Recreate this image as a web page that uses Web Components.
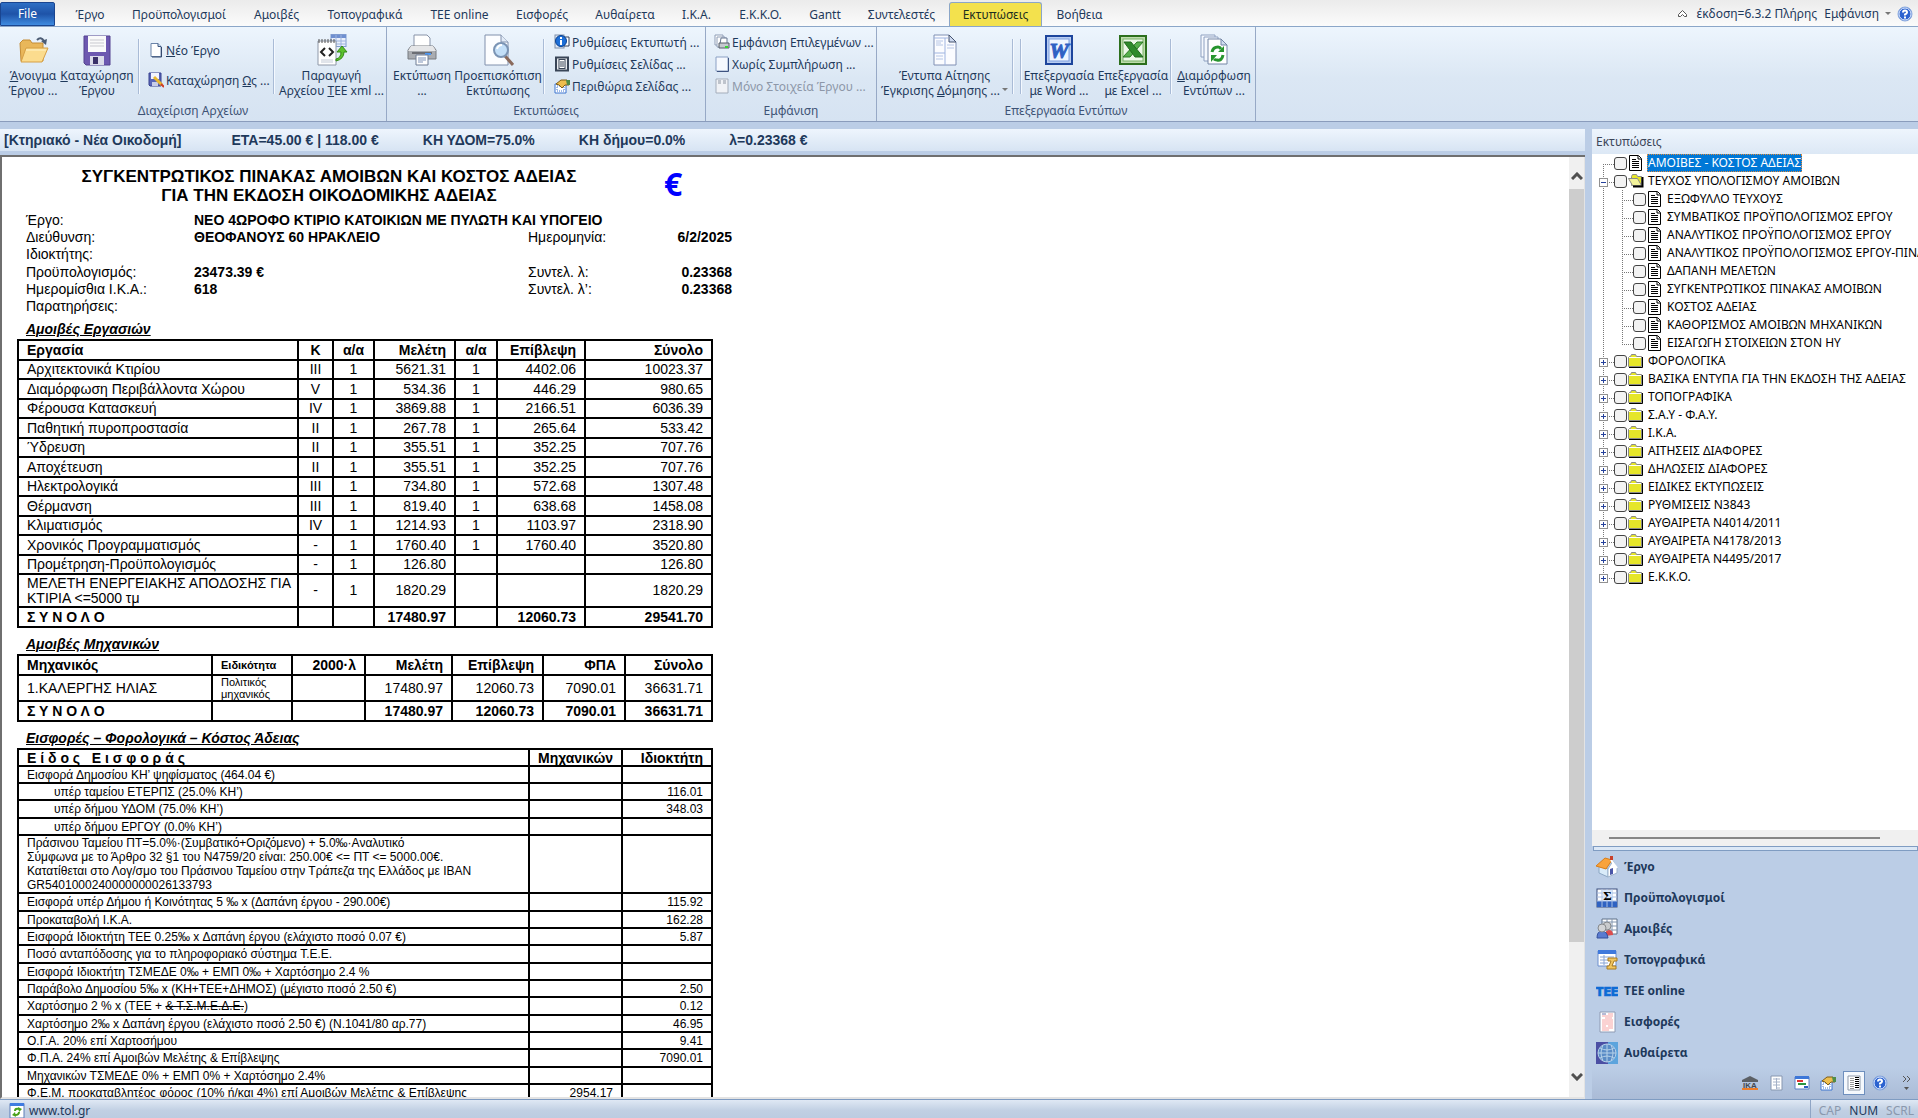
<!DOCTYPE html>
<html lang="el">
<head>
<meta charset="utf-8">
<title>Εκτυπώσεις</title>
<style>
    html, body { height: 100%; margin: 0; }
    body {
        font: 12px/15px "Noto Sans", "Open Sans", sans-serif;
        color: #1e395b;
        overflow: hidden;
    }
</style>
</head>
<body>
<print-app></print-app>

<script>
const ICONS = {
    open: [32, `<path d="M3 9l3-3h7l2 3h11v18H4z" fill="#e9b75a" stroke="#c58d35"/><path d="M4 28l5-14h22l-6 14z" fill="#fbdc8e" stroke="#d69f45"/><path d="M9 16h20" stroke="#fff3c8"/><path d="M20 6q4-4 7 1" fill="none" stroke="#4c5c74" stroke-width="2"/><path d="M24 7l6-2-1 6z" fill="#4c5c74"/>`],
    save: [32, `<path d="M3 2h26v29H5l-2-2z" fill="#6d58b0" stroke="#54438f"/><path d="M7 2h18v16H7z" fill="#fafafa"/><path d="M9 6h14M9 9h14M9 12h14" stroke="#c9c9cf"/><rect x="9" y="22" width="14" height="9" fill="#dcdcea"/><rect x="12" y="23" width="5" height="7" fill="#3b3169"/>`],
    new: [16, `<path d="M3 1.500h7l3 3v10H3z" fill="#fff" stroke="#6a83a8"/><path d="M10 1.500v3h3" fill="#cfe0f5" stroke="#3c5680"/><path d="M13.500 5v10H4" fill="none" stroke="#34496e"/>`],
    saveas: [16, `<path d="M1 1h12v13H2l-1-1z" fill="#5965b8" stroke="#36418e"/><rect x="3" y="1" width="8" height="6" fill="#f2f4ff"/><path d="M4 10h6v4H4z" fill="#c7cde9"/><path d="M6 5l8 8" stroke="#e8b730" stroke-width="3"/><path d="M13 12l3 3" stroke="#cf3c25" stroke-width="2"/>`],
    xml: [32, `<rect x="15" y="0.500" width="15" height="12" fill="#e9effb" stroke="#7f9bd0"/><rect x="15" y="1" width="15" height="3" fill="#6f8fd0"/><path d="M15 7h15M15 10h15M20 1v12M25 1v12" stroke="#9db3de"/><path d="M2 7h18v24H2z" fill="#fff" stroke="#8f98a8"/><path d="M3 5v4M6 5v4M9 5v4M12 5v4M15 5v4M18 5v4" stroke="#555"/><path d="M9 14l-4 4 4 4M13 14l4 4-4 4" fill="none" stroke="#222" stroke-width="2"/><path d="M5 26h12M5 28h12" stroke="#c3cad6"/><path d="M20 25q5-1 5-7h-4l5-6 5 6h-3q0 7-8 9z" fill="#5cc12d" stroke="#358a14"/>`],
    print: [32, `<path d="M8 1h13l3 3v9H8z" fill="#fff" stroke="#8893a8"/><path d="M5 12h22l3 4v9H2v-9z" fill="#a9acb1" stroke="#777a80"/><path d="M5 12h22l3 5H2z" fill="#e5e6e8"/><rect x="6" y="18" width="20" height="2" fill="#6c6e74"/><rect x="19" y="19" width="6" height="2" fill="#4c98f4"/><path d="M10 21h12v10H10z" fill="#fff" stroke="#6f7c94"/><path d="M12 24h8M12 26h8M12 28h5" stroke="#7f93b8"/>`],
    preview: [32, `<path d="M3 1h16l7 7v23H3z" fill="#fcfdff" stroke="#8090ac"/><path d="M19 1v7h7" fill="#e2ebf7" stroke="#8090ac"/><path d="M23 22l8 9" stroke="#8a6a5c" stroke-width="3"/><circle cx="19" cy="16" r="7" fill="#c3dff8" stroke="#7b94b4" stroke-width="2"/><path d="M15 15q1-4 5-4" fill="none" stroke="#fff" stroke-width="2"/>`],
    info: [16, `<rect x="1" y="1" width="9" height="13" fill="#dfe7f4" stroke="#7f90aa"/><path d="M10 3h5v9h-5z" fill="#fff" stroke="#32405c"/><circle cx="7" cy="7" r="5.500" fill="#1d6fd8" stroke="#0b418f"/><path d="M7 6v5M7 3v2" stroke="#fff" stroke-width="2"/>`],
    page: [16, `<rect x="2" y="1.500" width="12" height="13" fill="#e9ebee" stroke="#394557" stroke-width="2"/><rect x="5" y="3.500" width="6" height="9" fill="#fff" stroke="#394557"/><path d="M6 6h4M6 8h4M6 10h4" stroke="#394557"/>`],
    margins: [16, `<path d="M1 6h11v9H1z" fill="#fff" stroke="#3c75d0"/><path d="M3 8h7v5H3z" fill="none" stroke="#3c75d0" stroke-dasharray="1"/><path d="M2 6l5-4h6l2 2v3h-4L8 10 5 7z" fill="#edbe4f" stroke="#7e5c16"/><path d="M12 2h4v5h-3z" fill="#4f8c48"/>`],
    printsel: [16, `<path d="M1 1h8v10H1z" fill="#fff" stroke="#8e9db6"/><path d="M3 3h8v10H3z" fill="#fff" stroke="#8e9db6"/><path d="M7 4h6v6H6z" fill="#fff" stroke="#667792"/><path d="M5 9h10v5H5z" fill="#c5c9cf" stroke="#555d69"/><rect x="11" y="12" width="3" height="2" fill="#35d530"/>`],
    blank: [16, `<path d="M2 1h12v14H2z" fill="#f6f9fe" stroke="#8ba0c4"/><path d="M14.500 2v13.500H3" fill="none" stroke="#3d5380"/>`],
    form: [16, `<path d="M2 1h12v14H2z" fill="#f0f2f6" stroke="#a4adbb"/><path d="M4 3h3M9 3h3M4 5h3M9 5h3" stroke="#8d95a2"/>`],
    forms: [32, `<path d="M5 1h15l7 7v23H5z" fill="#fbfcff" stroke="#8090b4"/><path d="M20 1v7h7z" fill="#cdd9ef" stroke="#45536f"/><path d="M16 4v27M5 4h14M5 19h11" stroke="#9fb4e0"/><path d="M7 7h7M7 9h5M7 11h7M18 11h7M18 14h7M7 22h7M7 25h7" stroke="#b6c6e6"/>`],
    word: [32, `<rect x="3" y="2" width="26" height="28" fill="#b9cdf2" stroke="#1d459c" stroke-width="2"/><rect x="6" y="5" width="20" height="22" fill="#eef4ff" stroke="#7d9fdf"/><text x="16" y="24" font-family="Liberation Serif, serif" font-weight="bold" font-style="italic" font-size="22" text-anchor="middle" fill="#2f60c4" stroke="#2f60c4">W</text>`],
    excel: [32, `<rect x="3" y="2" width="26" height="28" fill="#bfdcae" stroke="#2c6f1d" stroke-width="2"/><rect x="6" y="5" width="20" height="22" fill="#edf8e8" stroke="#79b267"/><path d="M26 8h-6L6 23h7z" fill="#57b04c" stroke="#2f7a26"/><path d="M7 8h7l12 15h-8z" fill="#2f8a2b" stroke="#226b1e"/>`],
    format: [32, `<path d="M3 1h14v22H3z" fill="#f4f8fe" stroke="#8ea0c0"/><path d="M6 3h14v24H6z" fill="#f4f8fe" stroke="#8ea0c0"/><path d="M10 5h13l6 6v19H10z" fill="#fff" stroke="#7486a5"/><path d="M23 5v6h6z" fill="#cfdcf0" stroke="#7486a5"/><path d="M14 18q1-5 6-5 2 0 3 2M25 21q-1 6-6 5-2 0-3-1" fill="none" stroke="#27952e" stroke-width="3"/><path d="M20 18h6v-6zM19 21h-6v7z" fill="#27952e"/>`],
    help: [16, `<circle cx="8" cy="8" r="7" fill="#2b62d0" stroke="#86a6dc"/><circle cx="8" cy="8" r="6" fill="none" stroke="#e4eeff"/><path d="M6 6.500q0-2 2-2t2 2q0 1-2 2v1" fill="none" stroke="#fff" stroke-width="2"/><rect x="7" y="10.500" width="2" height="2" fill="#fff"/>`],
    home: [22, `<path d="M3 10l9 3v8l-9-4z" fill="#d9ebf9" stroke="#8ca7c4"/><path d="M12 13l5-8 4 7v5l-9 4z" fill="#fff" stroke="#9fb4cc"/><path d="M0 10l9-8 7 2-6 9z" fill="#f9a33b" stroke="#d97d17"/><path d="M15 4l6 8" stroke="#fff" stroke-width="2"/><rect x="14" y="0" width="3" height="4" fill="#c8412b"/><path d="M14 13l3-1v6l-3 1z" fill="#4b57a8"/>`],
    sigma: [22, `<rect x="1" y="2" width="20" height="18" fill="#fff" stroke="#3c4f7c"/><path d="M1 14h20v6H1z" fill="#2f62c2"/><path d="M6 2v18M11 2v18M16 2v18M1 6h20M1 10h20M1 14h20" stroke="#a9bfe5"/><rect x="7" y="3" width="9" height="10" fill="#d8e6fa"/><text x="11.500" y="13" text-anchor="middle" font-family="Liberation Serif, serif" font-weight="bold" font-size="13" fill="#000">Σ</text>`],
    people: [22, `<path d="M6 1h15v15H6z" fill="#fff" stroke="#5f7188"/><path d="M6 4h15M6 8h15M6 12h15M11 1v15M16 1v15" stroke="#8296b0"/><path d="M9 18q0-6 4-6t4 5z" fill="#dc4d4d"/><circle cx="11" cy="8" r="4" fill="#c9cbcd" stroke="#85888b"/><path d="M1 20q0-7 5-7t6 7z" fill="#5a7bd0" stroke="#35509c"/><circle cx="6" cy="10" r="4" fill="#d2d4d6" stroke="#85888b"/>`],
    topo: [22, `<path d="M2 2h18v15H2z" fill="#fff" stroke="#6d8fce"/><rect x="2" y="1" width="18" height="4" fill="#3f79dc"/><path d="M4 8h14M4 11h14M4 14h8M8 6v10" stroke="#87a3d4"/><path d="M12 9h9v3h-3l-2 5h4v3h-9v-3h2l2-5h-3z" fill="#f1c55e" stroke="#a87a20"/>`],
    tee: [22, `<text x="11" y="16" text-anchor="middle" font-family="Inter, sans-serif" font-weight="900" font-size="12" fill="#0e6bd5" stroke="#0e6bd5" stroke-width="0.500">TEE</text>`],
    fees: [22, `<path d="M4 1h15v20H4z" fill="#fff" stroke="#8e9bb4"/><path d="M6 3h4M12 3h5M6 5h11M9 7h7M6 9h11M6 11h11M6 13h11M6 15h4M12 15h5M6 17h11M6 19h7" stroke="#f6a5a5"/><path d="M6 3h4" stroke="#6fa2d8"/>`],
    globe: [22, `<rect width="22" height="22" fill="#4b4fa4"/><rect x="12" width="10" height="22" fill="#5ca4dd"/><circle cx="11" cy="11" r="9" fill="#5a8cc6" stroke="#b5cfe8"/><path d="M2 11h18M11 2v18M4 6q7 4 14 0M4 16q7-4 14 0M7 3q-4 8 0 16M15 3q4 8 0 16" fill="none" stroke="#b5d2ea"/>`],
    ika: [16, `<path d="M0 5l8-4 8 4v2H0z" fill="#5c6065"/><text x="8" y="13" text-anchor="middle" font-family="Liberation Sans, sans-serif" font-weight="bold" font-size="8" fill="#44494f">IKA</text><path d="M0 14h16" stroke="#ef7d27" stroke-width="2"/>`],
    sheet: [16, `<path d="M3 1h11v14H3z" fill="#fff" stroke="#8797b0"/><path d="M5 4h3M9 4h3M5 7h3M9 7h3M5 10h3M9 10h3M9 13h3M8.500 3v11" stroke="#a5b2c8"/>`],
    gantt: [16, `<path d="M1 2h14v12H1z" fill="#fff" stroke="#5d80c4"/><rect y="1" x="1" width="14" height="3" fill="#3d77d8"/><path d="M3 6h6" stroke="#d33" stroke-width="2"/><path d="M4 9h8" stroke="#2a9642" stroke-width="2"/><path d="M10 12h4" stroke="#2b5fc0" stroke-width="2"/>`],
    list: [16, `<path d="M2 1h12v14H2z" fill="#fff" stroke="#8e99aa"/><path d="M4 3.500h4M4 5.500h4M4 7.500h4M4 9.500h4M4 11.500h4M4 13.500h4" stroke="#999"/><path d="M9 2.500h4M9 4.500h4M9 6.500h4M9 8.500h4M9 10.500h4M9 12.500h4" stroke="#000"/>`],
    web: [16, `<rect x="1" y="1" width="14" height="14" fill="#fff" stroke="#5c7db8"/><rect x="1" y="0" width="14" height="3" fill="#3f7be0"/><path d="M6 8q0-3 4-2M10 9q0 3-4 3" fill="none" stroke="#4aa01c" stroke-width="2"/><path d="M9 4l4 2-3 3zM7 14l-4-2 3-3z" fill="#4aa01c"/>`],
    doc: [16, `<path d="M1.500 0.500h9l3 3v12h-12z" fill="#fff" stroke="#000"/><path d="M10 1v3h3" fill="none" stroke="#000"/><path d="M4 4.500h4M4 6.500h7M4 8.500h7M4 10.500h7M4 12.500h7" stroke="#000"/>`],
    folder: [16, `<path d="M0.500 13.500v-9l1-1h1l1-2h4l1 2h5v10z" fill="#e6e62a" stroke="#8a8a8a"/><path d="M1 4.500h12" stroke="#fff"/><path d="M14.500 4v10.500H1" fill="none" stroke="#000"/>`],
    folderopen: [16, `<path d="M3.500 12.500v-9l1-2h4l1 2h4v9z" fill="#e6e62a" stroke="#8a8a8a"/><path d="M0.500 5.500h9l4 7h-9z" fill="#f3f39a" stroke="#8a8a8a"/><path d="M14.500 4v9.500H5" fill="none" stroke="#000" stroke-width="2"/>`]
};

// Sets up the shadow root the same way for every element
class BaseElement extends HTMLElement {
    render(html) {
        if (!this.shadowRoot) this.attachShadow({ mode: 'open' });
        this.shadowRoot.innerHTML = html;
    }
}

class AppIcon extends BaseElement {
    connectedCallback() {
        const [size, body] = ICONS[this.getAttribute('name')];
        this.render(`
            <style>
                :host { display: block; flex: none; width: ${size}px; height: ${size}px; }
                svg { display: block; }
            </style>
            <svg width="${size}" height="${size}" viewBox="0 0 ${size} ${size}" aria-hidden="true">${body}</svg>
        `);
    }
}

class RibbonTabs extends BaseElement {
    connectedCallback() {
        const tabs = [['Έργο', 56], ['Προϋπολογισμοί', 122], ['Αμοιβές', 73], ['Τοπογραφικά', 104],
            ['TEE online', 85], ['Εισφορές', 80], ['Αυθαίρετα', 86], ['Ι.Κ.Α.', 57], ['Ε.Κ.Κ.Ο.', 71],
            ['Gantt', 58], ['Συντελεστές', 95], ['Εκτυπώσεις', 93], ['Βοήθεια', 75]];
        this.render(`
            <style>
                :host {
                    display: flex; height: 27px; padding-top: 1px; align-items: stretch; box-sizing: border-box;
                    background: linear-gradient(#ebebeb, #fbfbfb);
                    border-bottom: 1px solid #8ba6c8;
                }
                button { font: inherit; color: inherit; background: none; border: 0; padding: 2px 0 0; white-space: nowrap; }
                .file {
                    width: 55px; color: #fff; background: linear-gradient(#2f6fc4, #1e53a8 50%, #3f8be0);
                    border: 1px solid #1a4590; border-radius: 2px 2px 0 0; margin: 1px 7px 0 0; padding: 0 0 2px 0;
                }
                .on { background: #f3e14d; color: #1e2e1e; border: 1px solid #8ba6c8; border-bottom: 0; border-radius: 3px 3px 0 0; margin-top: 1px; padding-top: 0; }
                .right { margin-left: auto; display: flex; align-items: center; padding-right: 5px; }
                .right button { padding: 0; margin-left: 7px; }
                .tri { border: 3px solid transparent; border-top-color: #777; border-bottom: 0; margin: 0 6px; }
                .right span { padding-left: 10px; }
            </style>
            <button class="file">File</button>
            ${tabs.map(([t, w]) => `<button style="width:${w}px" class="${t === 'Εκτυπώσεις' ? 'on' : ''}">${t}</button>`).join('')}
            <div class="right">
                <svg width="9" height="8" viewBox="0 0 9 8"><path d="M0.500 4.500l4-4 4 4v2h-2l-2-2-2 2h-2z" fill="#fff" stroke="#555"/></svg>
                <span>έκδοση=6.3.2 Πλήρης</span>
                <button>Εμφάνιση</button>
                <i class="tri"></i>
                <app-icon name="help"></app-icon>
            </div>
        `);
    }
}

class RibbonGroup extends BaseElement {
    connectedCallback() {
        this.render(`
            <style>
                :host { display: flex; flex-direction: column; box-sizing: border-box; border-right: 1px solid #97a9c6; padding: 7px 0 0; }
                .items { display: flex; height: 69px; }
                .label { text-align: center; line-height: 15px; color: #3e5375; }
            </style>
            <div class="items"><slot></slot></div>
            <div class="label">${this.getAttribute('label')}</div>
        `);
    }
}

class RibbonButton extends BaseElement {
    connectedCallback() {
        this.render(`
            <style>
                :host { display: block; flex: none; }
                button {
                    width: 100%; font: inherit; color: inherit; background: none; border: 0; padding: 0;
                    display: flex; flex-direction: column; align-items: center; white-space: nowrap;
                }
                app-icon { margin-bottom: 2px; }
                :host([small]) button { flex-direction: row; gap: 2px; height: 22px; }
                :host([small]) app-icon { margin: 0; }
                button:disabled { color: #8d97a8; }
            </style>
            <button ${this.hasAttribute('disabled') ? 'disabled' : ''}>
                <app-icon name="${this.getAttribute('icon')}"></app-icon>
                <span><slot></slot></span>
            </button>
        `);
    }
}

class RibbonBar extends BaseElement {
    connectedCallback() {
        this.render(`
            <style>
                :host {
                    display: flex; height: 94px; border-bottom: 1px solid #8a9cbc;
                    background: linear-gradient(#edf5fd, #dbe7f4 55%, #d6e3f2);
                }
                .sep { width: 1px; margin: 5px 0 9px; background: #a9bbd6; border-right: 1px solid #f4f9ff; flex: none; }
                .col { display: flex; flex-direction: column; align-items: flex-start; flex: none; }
                .three { margin-top: -3px; }
                .two { padding-top: 5px; gap: 8px; }
                .tri { display: inline-block; border: 3px solid transparent; border-top-color: #777; border-bottom: 0; margin: 0 0 4px 2px; }
            </style>
            <ribbon-group label="Διαχείριση Αρχείων" style="width:387px">
                <ribbon-button icon="open" style="width:60px;margin-left:3px"><u>Ά</u>νοιγμα<br>Έργου ...</ribbon-button>
                <ribbon-button icon="save" style="width:68px"><u>Κ</u>αταχώρηση<br>Έργου</ribbon-button>
                <i class="sep" style="margin-left:7px"></i>
                <div class="col two" style="width:125px;margin-left:8px">
                    <ribbon-button small icon="new"><u>Ν</u>έο Έργο</ribbon-button>
                    <ribbon-button small icon="saveas">Καταχώρηση <u>Ω</u>ς ...</ribbon-button>
                </div>
                <i class="sep"></i>
                <ribbon-button icon="xml" style="width:113px">Παραγωγή<br>Αρχείου <u>T</u>EE xml ...</ribbon-button>
            </ribbon-group>
            <ribbon-group label="Εκτυπώσεις" style="width:319px">
                <ribbon-button icon="print" style="width:62px;margin-left:4px">Εκτύπωση<br>...</ribbon-button>
                <ribbon-button icon="preview" style="width:90px">Προεπισκόπιση<br>Εκτύπωσης</ribbon-button>
                <i class="sep"></i>
                <div class="col three" style="margin-left:9px">
                    <ribbon-button small icon="info">Ρυθμίσεις Εκτυπωτή ...</ribbon-button>
                    <ribbon-button small icon="page">Ρυθμίσεις Σελίδας ...</ribbon-button>
                    <ribbon-button small icon="margins">Περιθώρια Σελίδας ...</ribbon-button>
                </div>
            </ribbon-group>
            <ribbon-group label="Εμφάνιση" style="width:171px">
                <div class="col three" style="margin-left:8px">
                    <ribbon-button small icon="printsel">Εμφάνιση Επιλεγμένων ...</ribbon-button>
                    <ribbon-button small icon="blank">Χωρίς Συμπλήρωση ...</ribbon-button>
                    <ribbon-button small disabled icon="form">Μόνο Στοιχεία Έργου ...</ribbon-button>
                </div>
            </ribbon-group>
            <ribbon-group label="Επεξεργασία Εντύπων" style="width:379px">
                <ribbon-button icon="forms" style="width:135px">Έντυπα Αίτησης<br>Έγκρισης <u>Δ</u>όμησης ...<i class="tri"></i></ribbon-button>
                <i class="sep"></i><i class="sep" style="margin-left:6px"></i>
                <ribbon-button icon="word" style="width:74px">Επεξεργασία<br>με Word ...</ribbon-button>
                <ribbon-button icon="excel" style="width:74px">Επεξεργασία<br>με Excel ...</ribbon-button>
                <i class="sep"></i>
                <ribbon-button icon="format" style="width:84px"><u>Δ</u>ιαμόρφωση<br>Εντύπων ...</ribbon-button>
            </ribbon-group>
        `);
    }
}

class InfoBar extends BaseElement {
    connectedCallback() {
        this.render(`
            <style>
                :host {
                    display: flex; gap: 44px; height: 22px; padding-left: 4px; white-space: nowrap; overflow: hidden;
                    font: bold 14px/22px "Liberation Sans", Arial, sans-serif;
                    background: linear-gradient(#eef5fd, #d7e4f3);
                }
                .project { margin-right: 6px; }
            </style>
            <span class="project">[Κτηριακό - Νέα Οικοδομή]</span>
            <span>ΕΤΑ=45.00 € | 118.00 €</span>
            <span>ΚΗ ΥΔΟΜ=75.0%</span>
            <span>ΚΗ δήμου=0.0%</span>
            <span>λ=0.23368 €</span>
        `);
    }
}

// data: { cols: [widths], align: 'lcr...', head: [], rows: [[]], total: bool, tall: row index }
class ReportTable extends BaseElement {
    set data(d) {
        const cell = (tag, v, i) => `<${tag} class="${d.align[i]}">${v}</${tag}>`;
        const row = (r, i) => {
            const cls = d.total && i === d.rows.length - 1 ? 'total' : i === d.tall ? 'tall' : '';
            return `<tr class="${cls}">${r.map((v, j) => cell('td', v, j)).join('')}</tr>`;
        };
        this.render(`
            <style>
                :host { display: block; width: 694px; }
                table { width: 100%; table-layout: fixed; border-collapse: collapse; }
                th, td { border: 2px solid #000; box-sizing: border-box; padding: 0 8px; line-height: 15px; height: 19px; overflow: hidden; white-space: nowrap; }
                th { height: 20px; }
                tr:nth-child(even) td { height: 20px; }
                .l { text-align: left; }
                .c { text-align: center; padding: 0; }
                .r { text-align: right; }
                .total td { font-weight: bold; }
                :host(:not([dense])) tr.total td { height: 20px; }
                tr.tall.tall td { height: 33px; }
                small { display: block; font-size: 11px; line-height: 12px; }
                :host([dense]) td { height: 17px; font-size: 12px; line-height: 14px; }
                :host([dense]) th { height: 17px; line-height: 14px; }
                :host([dense]) tr:nth-child(3n) td { height: 18px; }
                .in { padding-left: 27px; }
            </style>
            <table>
                <colgroup>${d.cols.map(w => `<col style="width:${w}px">`).join('')}</colgroup>
                <thead><tr>${d.head.map((v, i) => cell('th', v, i)).join('')}</tr></thead>
                <tbody>${d.rows.map(row).join('')}</tbody>
            </table>
        `);
    }
}

class ReportView extends BaseElement {
    connectedCallback() {
        this.render(`
            <style>
                :host {
                    display: block; flex: 1; min-width: 0; overflow: hidden; padding: 10px 0 0 15px;
                    font: 14px/17px "Liberation Sans", Arial, sans-serif; color: #000; background: #fff;
                }
                header { display: grid; grid-template-columns: 624px auto; height: 45px; }
                h1 { font-size: 17px; line-height: 19px; margin: 0; text-align: center; }
                .euro { font: bold 32px/34px "Open Sans", sans-serif; color: #00f; padding-left: 23px; }
                dl { display: grid; grid-template-columns: 168px 334px 100px 104px; grid-template-rows: 17px 17px 18px 17px 17px 18px; margin: 0 0 4px 9px; }
                dt, dd { margin: 0; white-space: nowrap; }
                dt { grid-column: 1; }
                dd { font-weight: bold; }
                .k2 { grid-column: 3; }
                .v2 { grid-column: 4; text-align: right; }
                h2 { font-size: 14px; line-height: 18px; font-style: italic; text-decoration: underline; margin: 0 0 1px 9px; }
                #t1 { margin-bottom: 7px; }
                #t2 { margin-bottom: 7px; }
            </style>
            <header>
                <h1>ΣΥΓΚΕΝΤΡΩΤΙΚΟΣ ΠΙΝΑΚΑΣ ΑΜΟΙΒΩΝ ΚΑΙ ΚΟΣΤΟΣ ΑΔΕΙΑΣ<br>ΓΙΑ ΤΗΝ ΕΚΔΟΣΗ ΟΙΚΟΔΟΜΙΚΗΣ ΑΔΕΙΑΣ</h1>
                <div class="euro">€</div>
            </header>
            <dl>
                <dt>Έργο:</dt><dd>ΝΕΟ 4ΩΡΟΦΟ ΚΤΙΡΙΟ ΚΑΤΟΙΚΙΩΝ ΜΕ ΠΥΛΩΤΗ ΚΑΙ ΥΠΟΓΕΙΟ</dd>
                <dt>Διεύθυνση:</dt><dd>ΘΕΟΦΑΝΟΥΣ 60 ΗΡΑΚΛΕΙΟ</dd><dt class="k2">Ημερομηνία:</dt><dd class="v2">6/2/2025</dd>
                <dt>Ιδιοκτήτης:</dt><dd></dd>
                <dt>Προϋπολογισμός:</dt><dd>23473.39 €</dd><dt class="k2">Συντελ. λ:</dt><dd class="v2">0.23368</dd>
                <dt>Ημερομίσθια Ι.Κ.Α.:</dt><dd>618</dd><dt class="k2">Συντελ. λ’:</dt><dd class="v2">0.23368</dd>
                <dt>Παρατηρήσεις:</dt><dd></dd>
            </dl>
            <h2>Αμοιβές Εργασιών</h2>
            <report-table id="t1"></report-table>
            <h2>Αμοιβές Μηχανικών</h2>
            <report-table id="t2"></report-table>
            <h2>Εισφορές – Φορολογικά – Κόστος Άδειας</h2>
            <report-table id="t3" dense></report-table>
        `);
        const $ = id => this.shadowRoot.getElementById(id);
        $('t1').data = {
            cols: [280, 35, 41, 81, 42, 88, 127],
            align: 'lccrcrr',
            head: ['Εργασία', 'Κ', 'α/α', 'Μελέτη', 'α/α', 'Επίβλεψη', 'Σύνολο'],
            rows: [
                ['Αρχιτεκτονικά Κτιρίου', 'III', '1', '5621.31', '1', '4402.06', '10023.37'],
                ['Διαμόρφωση Περιβάλλοντα Χώρου', 'V', '1', '534.36', '1', '446.29', '980.65'],
                ['Φέρουσα Κατασκευή', 'IV', '1', '3869.88', '1', '2166.51', '6036.39'],
                ['Παθητική πυροπροστασία', 'II', '1', '267.78', '1', '265.64', '533.42'],
                ['Ύδρευση', 'II', '1', '355.51', '1', '352.25', '707.76'],
                ['Αποχέτευση', 'II', '1', '355.51', '1', '352.25', '707.76'],
                ['Ηλεκτρολογικά', 'III', '1', '734.80', '1', '572.68', '1307.48'],
                ['Θέρμανση', 'III', '1', '819.40', '1', '638.68', '1458.08'],
                ['Κλιματισμός', 'IV', '1', '1214.93', '1', '1103.97', '2318.90'],
                ['Χρονικός Προγραμματισμός', '-', '1', '1760.40', '1', '1760.40', '3520.80'],
                ['Προμέτρηση-Προϋπολογισμός', '-', '1', '126.80', '', '', '126.80'],
                ['ΜΕΛΕΤΗ ΕΝΕΡΓΕΙΑΚΗΣ ΑΠΟΔΟΣΗΣ ΓΙΑ<br>ΚΤΙΡΙΑ &lt;=5000 τμ', '-', '1', '1820.29', '', '', '1820.29'],
                ['Σ Υ Ν Ο Λ Ο', '', '', '17480.97', '', '12060.73', '29541.70']
            ],
            total: true,
            tall: 11
        };
        $('t2').data = {
            cols: [194, 80, 73, 87, 91, 82, 87],
            align: 'llrrrrr',
            head: ['Μηχανικός', '<small>Ειδικότητα</small>', '2000·λ', 'Μελέτη', 'Επίβλεψη', 'ΦΠΑ', 'Σύνολο'],
            rows: [
                ['1.ΚΑΛΕΡΓΗΣ ΗΛΙΑΣ', '<small>Πολιτικός<br>μηχανικός</small>', '', '17480.97', '12060.73', '7090.01', '36631.71'],
                ['Σ Υ Ν Ο Λ Ο', '', '', '17480.97', '12060.73', '7090.01', '36631.71']
            ],
            total: true
        };
        const sub = t => `<span class="in">${t}</span>`;
        $('t3').data = {
            cols: [511, 93, 90],
            align: 'lrr',
            head: ['Ε ί δ ο ς &nbsp; Ε ι σ φ ο ρ ά ς', 'Μηχανικών', 'Ιδιοκτήτη'],
            rows: [
                ['Εισφορά Δημοσίου ΚΗ’ ψηφίσματος (464.04 €)', '', ''],
                [sub('υπέρ ταμείου ΕΤΕΡΠΣ (25.0% ΚΗ’)'), '', '116.01'],
                [sub('υπέρ δήμου ΥΔΟΜ (75.0% ΚΗ’)'), '', '348.03'],
                [sub('υπέρ δήμου ΕΡΓΟΥ (0.0% ΚΗ’)'), '', ''],
                ['Πράσινου Ταμείου ΠΤ=5.0%·(Συμβατικό+Οριζόμενο) + 5.0‰·Αναλυτικό<br>Σύμφωνα με το Άρθρο 32 §1 του Ν4759/20 είναι: 250.00€ &lt;= ΠΤ &lt;= 5000.00€.<br>Κατατίθεται στο Λογ/σμο του Πράσινου Ταμείου στην Τράπεζα της Ελλάδος με IBAN<br>GR5401000240000000026133793', '', ''],
                ['Εισφορά υπέρ Δήμου ή Κοινότητας 5 ‰ x (Δαπάνη έργου - 290.00€)', '', '115.92'],
                ['Προκαταβολή Ι.Κ.Α.', '', '162.28'],
                ['Εισφορά Ιδιοκτήτη ΤΕΕ 0.25‰ x Δαπάνη έργου (ελάχιστο ποσό 0.07 €)', '', '5.87'],
                ['Ποσό ανταπόδοσης για το πληροφοριακό σύστημα Τ.Ε.Ε.', '', ''],
                ['Εισφορά Ιδιοκτήτη ΤΣΜΕΔΕ 0‰ + ΕΜΠ 0‰ + Χαρτόσημο 2.4 %', '', ''],
                ['Παράβολο Δημοσίου 5‰ x (ΚΗ+ΤΕΕ+ΔΗΜΟΣ) (μέγιστο ποσό 2.50 €)', '', '2.50'],
                ['Χαρτόσημο 2 % x (ΤΕΕ + <s>&amp; Τ.Σ.Μ.Ε.Δ.Ε.</s>)', '', '0.12'],
                ['Χαρτόσημο 2‰ x Δαπάνη έργου (ελάχιστο ποσό 2.50 €) (Ν.1041/80 αρ.77)', '', '46.95'],
                ['Ο.Γ.Α. 20% επί Χαρτοσήμου', '', '9.41'],
                ['Φ.Π.Α. 24% επί Αμοιβών Μελέτης &amp; Επίβλεψης', '', '7090.01'],
                ['Μηχανικών ΤΣΜΕΔΕ 0% + ΕΜΠ 0% + Χαρτόσημο 2.4%', '', ''],
                ['Φ.Ε.Μ. προκαταβλητέος φόρος (10% ή/και 4%) επί Αμοιβών Μελέτης &amp; Επίβλεψης', '2954.17', '']
            ]
        };
    }
}

class DocScroll extends BaseElement {
    connectedCallback() {
        this.render(`
            <style>
                :host { display: flex; flex-direction: column; width: 15px; background: #f0f0f0; border-right: 1px solid #e3e3e3; }
                button { height: 32px; border: 0; padding: 5px 0 0; background: none; display: grid; place-items: center; }
                .down { padding: 0 0 8px; }
                .track { flex: 1; }
                .thumb { height: 86%; background: #cdcdcd; }
            </style>
            <button aria-label="Πάνω"><svg width="12" height="8"><path d="M1 7l5-5 5 5" fill="none" stroke="#505050" stroke-width="3"/></svg></button>
            <div class="track"><div class="thumb"></div></div>
            <button class="down" aria-label="Κάτω"><svg width="12" height="8"><path d="M1 1l5 5 5-5" fill="none" stroke="#505050" stroke-width="3"/></svg></button>
        `);
    }
}

class TreeItem extends BaseElement {
    connectedCallback() {
        const child = this.hasAttribute('child');
        const sign = this.getAttribute('sign');
        this.render(`
            <style>
                :host { display: block; }
                label { display: flex; align-items: center; height: 18px; color: #000; white-space: nowrap; }
                .cell {
                    width: 21px; height: 18px; flex: none; display: flex; align-items: center; padding-left: 6px; box-sizing: border-box;
                    --v: repeating-linear-gradient(#777 0 1px, transparent 1px 2px);
                    --h: repeating-linear-gradient(90deg, #777 0 1px, transparent 1px 2px);
                    background: var(--v) 10px 0 / 1px 100% no-repeat, var(--h) 10px 10px / 12px 1px no-repeat;
                }
                :host([first]) .cell { background: var(--v) 10px 10px / 1px 8px no-repeat, var(--h) 10px 10px / 12px 1px no-repeat; }
                :host([last]) .main { background: var(--v) 10px 0 / 1px 10px no-repeat, var(--h) 10px 10px / 12px 1px no-repeat; }
                .pass, :host([last]) .pass { background: var(--v) 10px 0 / 1px 100% no-repeat; }
                .sub { width: 19px; background: var(--v) 8px 0 / 1px 100% no-repeat, var(--h) 8px 10px / 11px 1px no-repeat; }
                :host([last]) .sub { background: var(--v) 8px 0 / 1px 10px no-repeat, var(--h) 8px 10px / 11px 1px no-repeat; }
                .box { width: 9px; height: 9px; box-sizing: border-box; border: 1px solid #919191; background: #fff; margin-top: 3px; }
                .box svg { display: block; }
                input { appearance: none; box-sizing: border-box; margin: 0 1px 0 0; width: 13px; height: 13px; flex: none; background: #f3f3f3; border: 1px solid #444; border-radius: 3px; }
                .text { padding: 0 1px; margin-left: 3px; height: 18px; line-height: 18px; }
                :host([selected]) .text { background: #0078d7; color: #fff; outline: 1px dotted #e08a3c; outline-offset: -1px; }
            </style>
            <label>
                ${child ? '<i class="cell pass"></i><i class="cell sub"></i>' : `<i class="cell main">${sign ? `<span class="box"><svg width="7" height="7"><path d="${sign === '+' ? 'M1 3.500h5M3.500 1v5' : 'M1 3.500h5'}" stroke="#26429c"/></svg></span>` : ''}</i>`}
                <input type="checkbox">
                <app-icon name="${this.getAttribute('icon')}"></app-icon>
                <span class="text"><slot></slot></span>
            </label>
        `);
    }
}

class PrintTree extends BaseElement {
    connectedCallback() {
        const docs = ['ΕΞΩΦΥΛΛΟ ΤΕΥΧΟΥΣ', 'ΣΥΜΒΑΤΙΚΟΣ ΠΡΟΫΠΟΛΟΓΙΣΜΟΣ ΕΡΓΟΥ', 'ΑΝΑΛΥΤΙΚΟΣ ΠΡΟΫΠΟΛΟΓΙΣΜΟΣ ΕΡΓΟΥ',
            'ΑΝΑΛΥΤΙΚΟΣ ΠΡΟΫΠΟΛΟΓΙΣΜΟΣ ΕΡΓΟΥ-ΠΙΝΑ', 'ΔΑΠΑΝΗ ΜΕΛΕΤΩΝ', 'ΣΥΓΚΕΝΤΡΩΤΙΚΟΣ ΠΙΝΑΚΑΣ ΑΜΟΙΒΩΝ',
            'ΚΟΣΤΟΣ ΑΔΕΙΑΣ', 'ΚΑΘΟΡΙΣΜΟΣ ΑΜΟΙΒΩΝ ΜΗΧΑΝΙΚΩΝ', 'ΕΙΣΑΓΩΓΗ ΣΤΟΙΧΕΙΩΝ ΣΤΟΝ ΗΥ'];
        const folders = ['ΦΟΡΟΛΟΓΙΚΑ', 'ΒΑΣΙΚΑ ΕΝΤΥΠΑ ΓΙΑ ΤΗΝ ΕΚΔΟΣΗ ΤΗΣ ΑΔΕΙΑΣ', 'ΤΟΠΟΓΡΑΦΙΚΑ', 'Σ.Α.Υ - Φ.Α.Υ.', 'Ι.Κ.Α.',
            'ΑΙΤΗΣΕΙΣ ΔΙΑΦΟΡΕΣ', 'ΔΗΛΩΣΕΙΣ ΔΙΑΦΟΡΕΣ', 'ΕΙΔΙΚΕΣ ΕΚΤΥΠΩΣΕΙΣ', 'ΡΥΘΜΙΣΕΙΣ Ν3843', 'ΑΥΘΑΙΡΕΤΑ Ν4014/2011',
            'ΑΥΘΑΙΡΕΤΑ Ν4178/2013', 'ΑΥΘΑΙΡΕΤΑ Ν4495/2017', 'Ε.Κ.Κ.Ο.'];
        this.render(`
            <style>
                :host { display: flex; flex-direction: column; flex: 1; min-height: 0; }
                .head { height: 25px; line-height: 26px; padding-left: 4px; background: linear-gradient(#eef5fd, #dce8f5); color: #3c4658; }
                .tree { flex: 1; min-height: 0; overflow: hidden; background: #fff; padding-left: 1px; }
                .hbar { height: 16px; background: #f0f0f0; display: flex; align-items: center; }
                .hbar i { height: 2px; background: #868686; margin: 0 38px 0 17px; flex: 1; }
            </style>
            <div class="head">Εκτυπώσεις</div>
            <div class="tree">
                <tree-item first selected icon="doc">ΑΜΟΙΒΕΣ - ΚΟΣΤΟΣ ΑΔΕΙΑΣ</tree-item>
                <tree-item sign="-" icon="folderopen">ΤΕΥΧΟΣ ΥΠΟΛΟΓΙΣΜΟΥ ΑΜΟΙΒΩΝ</tree-item>
                ${docs.map((t, i) => `<tree-item child ${i === docs.length - 1 ? 'last' : ''} icon="doc">${t}</tree-item>`).join('')}
                ${folders.map((t, i) => `<tree-item sign="+" ${i === folders.length - 1 ? 'last' : ''} icon="folder">${t}</tree-item>`).join('')}
            </div>
            <div class="hbar"><i></i></div>
        `);
    }
}

class NavPane extends BaseElement {
    connectedCallback() {
        const items = [['home', 'Έργο'], ['sigma', 'Προϋπολογισμοί'], ['people', 'Αμοιβές'], ['topo', 'Τοπογραφικά'],
            ['tee', 'TEE online'], ['fees', 'Εισφορές'], ['globe', 'Αυθαίρετα']];
        this.render(`
            <style>
                :host { display: block; background: #bbcde6; }
                .split { height: 3px; margin-left: 1px; border: 1px solid #7f9cc2; background: #dce8f6; }
                a { display: flex; align-items: center; gap: 6px; height: 31px; padding-left: 4px; font-weight: bold; color: #1e395b; text-decoration: none; }
                .bar { display: flex; align-items: center; justify-content: flex-end; height: 29px; padding: 0 7px 2px 0; background: linear-gradient(#bbcde6, #aabbd6); }
                button { border: 0; background: none; padding: 0; margin-right: 10px; }
                .on { border: 1px solid #6e8fbe; padding: 3px 2px; background: #f4f8fd; margin-right: 7px; }
                .more { margin: 0 0 0 4px; }
                .more svg { display: block; }
            </style>
            <div class="split"></div>
            <nav>${items.map(([i, t]) => `<a href="#"><app-icon name="${i}"></app-icon>${t}</a>`).join('')}</nav>
            <div class="bar">
                <button aria-label="ΙΚΑ"><app-icon name="ika"></app-icon></button>
                <button aria-label="Ε.Κ.Κ.Ο."><app-icon name="sheet"></app-icon></button>
                <button aria-label="Gantt"><app-icon name="gantt"></app-icon></button>
                <button aria-label="Συντελεστές" style="margin-right:7px"><app-icon name="margins"></app-icon></button>
                <button class="on" aria-label="Εκτυπώσεις"><app-icon name="list"></app-icon></button>
                <button aria-label="Βοήθεια"><app-icon name="help"></app-icon></button>
                <button class="more" aria-label="Περισσότερα"><svg width="9" height="16"><path d="M1 1l3 3-3 3M5 1l3 3-3 3" fill="none" stroke="#555"/><path d="M2 12h5l-2.500 3z" fill="#555"/></svg></button>
            </div>
        `);
    }
}

class StatusBar extends BaseElement {
    connectedCallback() {
        this.render(`
            <style>
                :host {
                    display: flex; height: 18px; border-top: 1px solid #7f9cc2;
                    background: linear-gradient(#dfe8f4, #c0cfe3 60%, #bccce1); padding: 0 4px 0 9px;
                }
                a { display: flex; gap: 4px; color: inherit; text-decoration: none; padding-top: 3px; }
                .keys { margin-left: auto; display: flex; gap: 8px; padding: 3px 0 0 8px; border-left: 1px solid #8fa5c5; color: #8a98ad; }
                b { font-weight: normal; color: #1e395b; }
            </style>
            <a href="#"><app-icon name="web"></app-icon>www.tol.gr</a>
            <div class="keys"><span>CAP</span><b>NUM</b><span>SCRL</span></div>
        `);
    }
}

class PrintApp extends BaseElement {
    connectedCallback() {
        this.render(`
            <style>
                :host { display: flex; flex-direction: column; height: 100vh; background: #bbcde6; }
                main { flex: 1; min-height: 0; display: grid; grid-template-columns: 1fr 326px; column-gap: 7px; padding-top: 7px; }
                .left { display: flex; flex-direction: column; min-width: 0; min-height: 0; }
                .doc { flex: 1; min-height: 0; display: flex; margin-top: 4px; border: 2px solid #6f6f6f; border-right: 0; border-bottom: 2px solid #e3e3e3; background: #fff; }
                .right { display: flex; flex-direction: column; min-height: 0; min-width: 0; }
            </style>
            <ribbon-tabs></ribbon-tabs>
            <ribbon-bar></ribbon-bar>
            <main>
                <div class="left">
                    <info-bar></info-bar>
                    <div class="doc"><report-view></report-view><doc-scroll></doc-scroll></div>
                </div>
                <div class="right"><print-tree></print-tree><nav-pane></nav-pane></div>
            </main>
            <status-bar></status-bar>
        `);
    }
}

customElements.define('app-icon', AppIcon);
customElements.define('ribbon-tabs', RibbonTabs);
customElements.define('ribbon-group', RibbonGroup);
customElements.define('ribbon-button', RibbonButton);
customElements.define('ribbon-bar', RibbonBar);
customElements.define('info-bar', InfoBar);
customElements.define('report-table', ReportTable);
customElements.define('report-view', ReportView);
customElements.define('doc-scroll', DocScroll);
customElements.define('tree-item', TreeItem);
customElements.define('print-tree', PrintTree);
customElements.define('nav-pane', NavPane);
customElements.define('status-bar', StatusBar);
customElements.define('print-app', PrintApp);
</script>
</body>
</html>
